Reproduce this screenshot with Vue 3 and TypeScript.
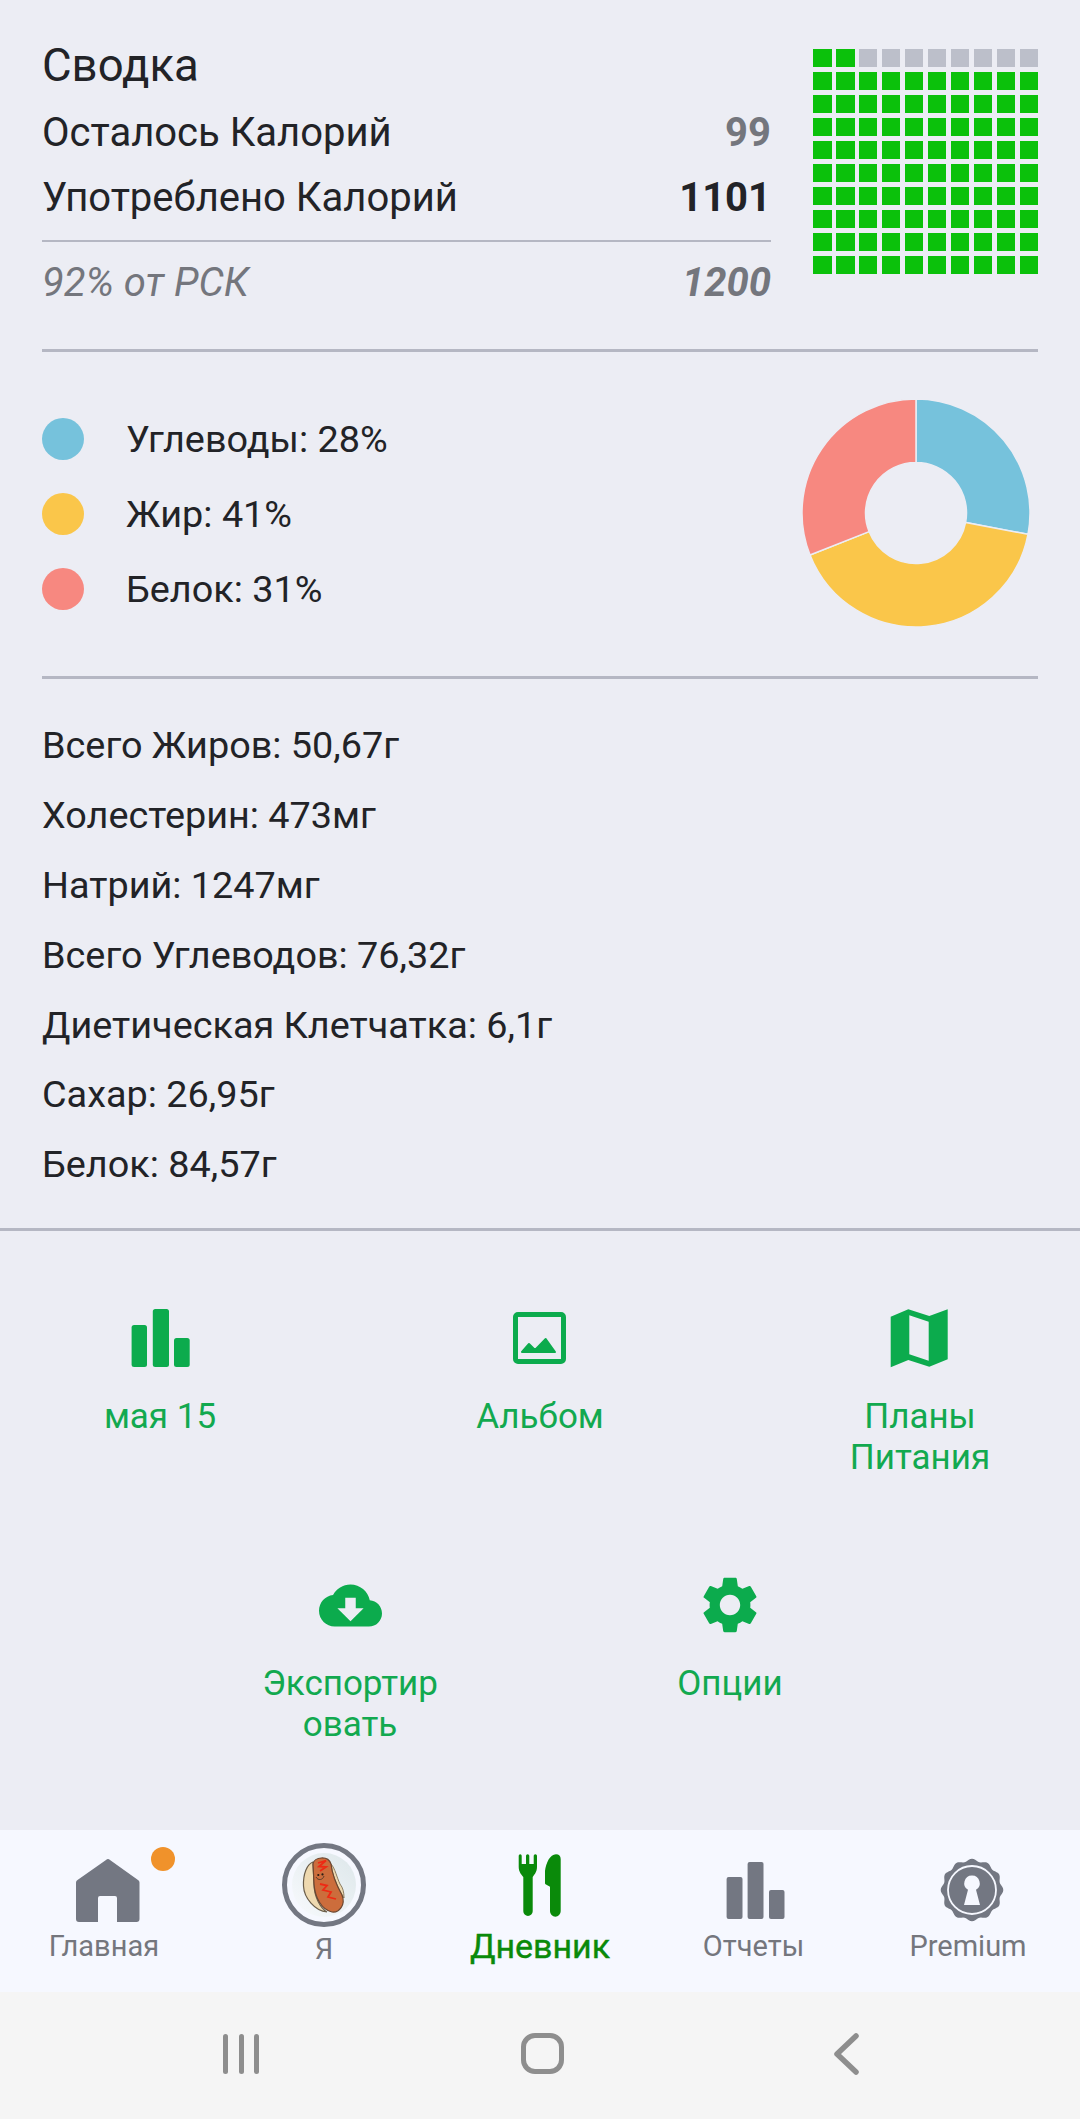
<template>
  <div class="page">
    <section class="summary">
      <div class="summary-text">
        <h2 class="title">Сводка</h2>
        <div class="row"><span>Осталось Калорий</span><b class="muted">99</b></div>
        <div class="row"><span>Употреблено Калорий</span><b>1101</b></div>
        <div class="row goal"><span>92% от РСК</span><b>1200</b></div>
      </div>
      <div class="grid">
        <i v-for="n in 100" :key="n" :class="{ off: n > 2 && n <= 10 }"></i>
      </div>
    </section>

    <section class="macros">
      <ul class="legend">
        <li v-for="m in macros" :key="m.name">
          <i :style="{ background: m.color }"></i>{{ m.name }}: {{ m.pct }}%
        </li>
      </ul>
      <svg class="donut" width="230" height="230" viewBox="-115 -115 230 230">
        <path v-for="s in slices" :key="s.name" :d="s.d" :fill="s.color" stroke="#ecedf4" stroke-width="1.5" />
      </svg>
    </section>

    <section class="nutrients">
      <p v-for="line in nutrients" :key="line">{{ line }}</p>
    </section>

    <section class="actions">
      <div class="action-row">
        <div class="action">
          <div class="action-icon">
            <svg width="60" height="60" viewBox="0 0 60 60"><rect x="1.6" y="17" width="15.400" height="42" rx="2.5" /><rect x="22.8" y="1" width="16.200" height="58" rx="2.5" /><rect x="44" y="30" width="15.700" height="29" rx="2.5" /></svg>
          </div>
          <span>мая 15</span>
        </div>
        <div class="action">
          <div class="action-icon">
            <svg width="60" height="60" viewBox="0 0 60 60"><path fill-rule="evenodd" d="M8 4h43a5 5 0 0 1 5 5v42a5 5 0 0 1-5 5H8a5 5 0 0 1-5-5V9a5 5 0 0 1 5-5Zm0 5v42h43V9Z" /><path d="M12 44 19 36l6 6 10.700-11L45 44Z" stroke="#0cab4d" stroke-width="2" stroke-linejoin="round" /></svg>
          </div>
          <span>Альбом</span>
        </div>
        <div class="action">
          <div class="action-icon">
            <svg width="60" height="60" viewBox="0 0 60 60"><path fill-rule="evenodd" d="M.7 8.700 18.300 1.300 39.300 8 57.700 1.300V51.300L39.300 58.700 18.300 52 .7 59.300ZM19.300 7.300V46.300L38.700 52.700V13.700Z" /></svg>
          </div>
          <span>Планы Питания</span>
        </div>
      </div>
      <div class="action-row">
        <div class="action">
          <div class="action-icon">
            <svg width="63" height="63" viewBox="0 0 24 24"><path d="M19.35 10.040C18.670 6.590 15.640 4 12 4 9.110 4 6.600 5.640 5.350 8.040 2.340 8.360 0 10.910 0 14c0 3.310 2.690 6 6 6h13c2.760 0 5-2.240 5-5 0-2.640-2.050-4.780-4.650-4.960zM17 13l-5 5-5-5h3V9h4v4h3z" /></svg>
          </div>
          <span>Экспортировать</span>
        </div>
        <div class="action">
          <div class="action-icon">
            <svg width="68" height="68" viewBox="0 0 24 24"><path d="M19.140 12.940c.04-.3.06-.61.06-.94 0-.32-.02-.64-.07-.94l2.030-1.580c.18-.14.23-.41.12-.61l-1.920-3.320c-.12-.22-.37-.29-.59-.22l-2.390.96c-.5-.38-1.030-.7-1.620-.94l-.36-2.540c-.04-.24-.24-.41-.48-.41h-3.840c-.24 0-.43.17-.47.41l-.36 2.540c-.59.24-1.130.57-1.620.94l-2.390-.96c-.22-.08-.47 0-.59.22L2.740 8.870c-.12.21-.08.47.12.61l2.030 1.580c-.05.3-.09.63-.09.94s.02.64.07.94l-2.030 1.580c-.18.14-.23.41-.12.61l1.920 3.320c.12.22.37.29.59.22l2.390-.96c.5.38 1.030.7 1.620.94l.36 2.540c.05.24.24.41.48.41h3.840c.24 0 .44-.17.47-.41l.36-2.540c.59-.24 1.130-.56 1.620-.94l2.390.96c.22.08.47 0 .59-.22l1.920-3.320c.12-.22.07-.47-.12-.61l-2.010-1.580zM12 15.600c-1.980 0-3.600-1.620-3.600-3.600s1.620-3.600 3.600-3.600 3.600 1.620 3.600 3.600-1.620 3.600-3.600 3.600z" /></svg>
          </div>
          <span>Опции</span>
        </div>
      </div>
    </section>

    <nav class="tabs">
      <div class="tab">
        <svg width="64" height="64" viewBox="0 0 64 64"><path d="M30 2a3 3 0 0 1 4 0L62 22a3 3 0 0 1 1.500 2.500V61a3 3 0 0 1-3 3H41V40a2 2 0 0 0-2-2H24a2 2 0 0 0-2 2v24H3a3 3 0 0 1-3-3V24.500A3 3 0 0 1 1.500 22Z" /></svg>
        <i class="dot"></i>
        <span class="shift-left">Главная</span>
      </div>
      <div class="tab">
        <div class="avatar">
          <svg width="74" height="74" viewBox="0 0 74 74">
            <defs>
              <linearGradient id="plate" x1="0" y1="1" x2="1" y2="0">
                <stop offset="0" stop-color="#f8fafd" />
                <stop offset="1" stop-color="#dde7ea" />
              </linearGradient>
            </defs>
            <circle cx="37" cy="37" r="32" fill="url(#plate)" />
            <path d="M26 14C20 16 16 26 16.500 38 17 50 28 63 40 64 33 60 27 48 27 36Z" fill="#eed9b0" stroke="#6b5f4c" stroke-width="1.200" />
            <path d="M44 16C48 20 50 30 53 36 56 40 57 44 57 50L55 47C50 38 45 26 44 16Z" fill="#eed9b0" stroke="#8a7c62" stroke-width="1" />
            <path d="M26 16C27 9 41 7 44 16 45 26 50 38 55 47 59 57 52 65 45 64 35 62 28 50 27 36Z" fill="#cc6d3c" stroke="#6b4630" stroke-width="1.200" />
            <path d="M31 15 39 12.500 32 18.500 39 19 33 23M33 36 40 37.500 36 42 44 44 41 49 49 51" fill="none" stroke="#ee2a14" stroke-width="1.800" />
            <circle cx="31.300" cy="27" r="1.100" fill="#2a1c14" />
            <circle cx="35.500" cy="26.400" r="1.100" fill="#2a1c14" />
            <path d="M29 29c2 4 7 3 8-1" fill="none" stroke="#5a3d2c" stroke-width="1" />
          </svg>
        </div>
        <span>Я</span>
      </div>
      <div class="tab active">
        <svg width="44" height="64" viewBox="0 0 44 64">
          <path d="M.7 2.800a1.500 1.500 0 0 1 3 0V11h4.300V2.800a1.650 1.650 0 0 1 3.300 0V11h4.400V2.800a1.650 1.650 0 0 1 3.300 0V14c0 5-3 8-4.300 10v34.300a4.700 4.700 0 0 1-9.400 0V24C3.700 22 .7 19 .7 14Z" />
          <path d="M38 1.300C41 1.300 42.700 3 42.700 6V58.300a5.350 5.350 0 0 1-10.700 0V33.700L28 31.500A1.500 1.500 0 0 1 27 30V18C28 10 32 1.300 38 1.300Z" />
        </svg>
        <span>Дневник</span>
      </div>
      <div class="tab">
        <svg width="60" height="60" viewBox="0 0 60 60"><rect x=".6" y="17" width="15.900" height="42" rx="2" /><rect x="21.600" y="2" width="15.900" height="57" rx="2" /><rect x="43" y="30" width="15.500" height="29" rx="2" /></svg>
        <span class="shift-left-sm">Отчеты</span>
      </div>
      <div class="tab">
        <svg width="64" height="64" viewBox="0 0 64 64">
          <path :d="badge" />
          <circle cx="32" cy="32" r="24" fill="none" stroke="#f6f8ff" stroke-width="1.800" />
          <path d="M32 17.500a7.700 7.700 0 0 1 4 14.300L40 47H24L28 31.800A7.700 7.700 0 0 1 32 17.500Z" fill="#f6f8ff" />
        </svg>
        <span class="shift-left">Premium</span>
      </div>
    </nav>

    <footer class="sysbar">
      <div class="recents"><i></i><i></i><i></i></div>
      <div class="home"></div>
      <svg width="26" height="42" viewBox="0 0 26 42"><path d="M23 3 4 21l19 18" fill="none" stroke="#8e8e8e" stroke-width="5.500" stroke-linecap="round" stroke-linejoin="round" /></svg>
    </footer>
  </div>
</template>

<script setup lang="ts">
const macros = [
  { name: 'Углеводы', pct: 28, color: '#76c2dc' },
  { name: 'Жир', pct: 41, color: '#fac64a' },
  { name: 'Белок', pct: 31, color: '#f78880' }
]

const nutrients = [
  'Всего Жиров: 50,67г',
  'Холестерин: 473мг',
  'Натрий: 1247мг',
  'Всего Углеводов: 76,32г',
  'Диетическая Клетчатка: 6,1г',
  'Сахар: 26,95г',
  'Белок: 84,57г'
]

// donut sectors go clockwise from the top
function sector(from: number, to: number): string {
  const R = 114
  const r = 50.5
  const a0 = (from / 100) * 2 * Math.PI
  const a1 = (to / 100) * 2 * Math.PI
  const large = to - from > 50 ? 1 : 0
  const p = (rad: number, a: number) => `${(rad * Math.sin(a)).toFixed(2)} ${(-rad * Math.cos(a)).toFixed(2)}`
  return `M${p(R, a0)}A${R} ${R} 0 ${large} 1 ${p(R, a1)}L${p(r, a1)}A${r} ${r} 0 ${large} 0 ${p(r, a0)}Z`
}

let acc = 0
const slices = macros.map((m) => {
  const d = sector(acc, acc + m.pct)
  acc += m.pct
  return { name: m.name, color: m.color, d }
})

// scalloped seal for the premium tab
function makeBadge(): string {
  const pts: string[] = []
  for (let i = 0; i < 120; i++) {
    const a = (i / 120) * 2 * Math.PI
    const rad = 30 + 1.3 * Math.cos(a * 12)
    pts.push(`${(32 + rad * Math.sin(a)).toFixed(2)} ${(32 - rad * Math.cos(a)).toFixed(2)}`)
  }
  return `M${pts.join('L')}Z`
}
const badge = makeBadge()
</script>

<style>
html, body {
  margin: 0;
  background: #ecedf4;
}
</style>

<style scoped>
.page {
  width: 1080px;
  height: 2119px;
  display: flex;
  flex-direction: column;
  background: #ecedf4;
  color: #222327;
  font-family: Roboto, "Noto Sans", sans-serif;
  font-size: 37.800px;
  overflow: hidden;
}
.page > * {
  flex: none;
}
.summary {
  height: 352px;
  margin: 0 42px;
  padding-top: 44px;
  box-sizing: border-box;
  border-bottom: 3px solid #b5b7c3;
  display: flex;
  justify-content: space-between;
}
.summary-text {
  width: 729px;
}
.title {
  margin: 0;
  font-size: 45.500px;
  font-weight: 400;
  line-height: 44px;
}
.row {
  display: flex;
  justify-content: space-between;
  height: 65px;
  line-height: 65px;
  font-size: 40px;
}
.row:nth-child(2) {
  margin-top: 12px;
}
.muted {
  color: #74767d;
}
.row b {
  font-weight: 700;
}
.goal {
  margin-top: 10px;
  border-top: 2px solid #b5b7c3;
  height: 82px;
  line-height: 82px;
  color: #74767d;
  font-style: italic;
}
.grid {
  display: grid;
  grid-template-columns: repeat(10, 18.500px);
  grid-auto-rows: 18px;
  gap: 5px 4.440px;
  margin-top: 5px;
}
.grid i {
  background: #0bc10b;
}
.grid i.off {
  background: #bcbfca;
}
.macros {
  height: 327px;
  margin: 0 42px;
  box-sizing: border-box;
  border-bottom: 3px solid #b5b7c3;
  display: flex;
  justify-content: space-between;
  align-items: flex-start;
}
.legend {
  list-style: none;
  margin: 0;
  padding: 49px 0 0;
}
.legend li {
  display: flex;
  align-items: center;
  height: 75px;
}
.legend i {
  width: 42px;
  height: 42px;
  border-radius: 50%;
  margin-right: 42px;
}
.donut {
  margin: 46px 7px 0 0;
}
.nutrients {
  height: 552px;
  box-sizing: border-box;
  padding: 32px 42px 0;
  border-bottom: 3px solid #b5b7c3;
}
.nutrients p {
  margin: 0;
  height: 69.900px;
  line-height: 69.900px;
}
.actions {
  height: 599px;
  box-sizing: border-box;
  padding-top: 77px;
  color: #12a94f;
  fill: #0cab4d;
}
.action-row {
  display: flex;
  justify-content: center;
  gap: 60px;
}
.action-row:first-child {
  height: 267px;
}
.action {
  width: 320px;
  display: flex;
  flex-direction: column;
  align-items: center;
}
.action-icon {
  height: 60px;
  display: flex;
  align-items: center;
  justify-content: center;
}
.action-icon svg {
  flex: none;
}
.action span {
  width: 180px;
  margin-top: 28px;
  text-align: center;
  line-height: 41px;
  font-size: 35px;
  overflow-wrap: anywhere;
}
.tabs {
  height: 162px;
  background: #f6f8ff;
  display: flex;
  color: #74767d;
  fill: #737782;
  font-size: 29px;
}
.tab {
  position: relative;
  width: 216px;
  height: 100%;
  box-sizing: border-box;
  padding-top: 28px;
  display: flex;
  flex-direction: column;
  align-items: center;
}
.tab svg {
  flex: none;
}
.tab > svg[height="60"] {
  margin: 2px 0;
}
.tab span {
  margin-top: 8px;
  line-height: 32px;
}
.shift-left {
  margin-right: 8px;
}
.shift-left-sm {
  margin-right: 5px;
}
.dot {
  position: absolute;
  left: 151px;
  top: 17px;
  width: 24px;
  height: 24px;
  border-radius: 50%;
  background: #f0922b;
}
.avatar {
  width: 84px;
  height: 84px;
  margin-top: -15px;
  box-sizing: border-box;
  border: 5px solid #737782;
  border-radius: 50%;
  overflow: hidden;
  background: #f6f8ff;
}
.avatar svg {
  display: block;
}
.avatar + span {
  margin-top: 6px;
}
.tab.active {
  color: #0a8a0a;
  fill: #0a8a0a;
  font-size: 34px;
}
.tab.active svg {
  margin-top: -5px;
}
.tab.active span {
  margin-top: 13px;
  -webkit-text-stroke: 0.4px #0a8a0a;
}
.sysbar {
  height: 127px;
  background: #f5f5f5;
  display: flex;
  align-items: center;
  justify-content: space-between;
  padding: 0 221px 4px 223px;
  box-sizing: border-box;
}
.recents {
  display: flex;
  gap: 10.500px;
}
.recents i {
  width: 5px;
  height: 40px;
  border-radius: 3px;
  background: #8e8e8e;
}
.home {
  width: 43px;
  height: 41px;
  margin-right: 8px;
  box-sizing: border-box;
  border: 5px solid #8e8e8e;
  border-radius: 14px;
}
</style>
